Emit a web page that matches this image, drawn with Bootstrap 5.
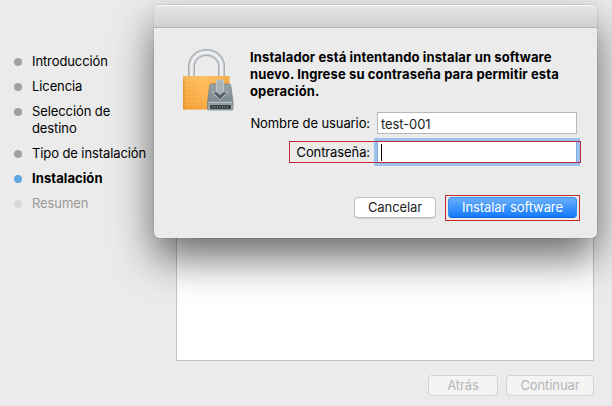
<!DOCTYPE html>
<html lang="es">
<head>
<meta charset="utf-8">
<meta name="viewport" content="width=device-width, initial-scale=1">
<title>Instalador</title>
<link href="https://cdn.jsdelivr.net/npm/bootstrap@5.3.0/dist/css/bootstrap.min.css" rel="stylesheet">
<style>
body{width:612px;height:406px;background:#ebebeb;font:13px/17px Inter,"Liberation Sans",sans-serif;color:#000;letter-spacing:-.1px}
.installer{height:406px}
.steps{width:176px;padding:53px 0 0 14px;gap:8px}
.step-item{gap:10px}
.step-dot{width:8px;height:8px;margin-top:5px;background:#a0a0a0;flex:none}
.step-current{font-weight:700;letter-spacing:.08px}
.step-current .step-dot{background:#62a6e2}
.step-next{color:#999}
.step-next .step-dot{background:#d8d8d8}
.pane-area{padding:20px 18px 10px 0}
.pane-box{background:#fff;border:1px solid #c4c4c4;height:341px}
.mac-btn{height:21px;padding:0;border:1px solid #bfbfbf;border-radius:4px;background:#fff;font-size:13px;line-height:19px;color:#222;letter-spacing:-.08px;box-shadow:0 1px 0 #d2d2d2}
.nav-btn:disabled{background:#f4f4f4;border-color:#d2d2d2;color:#b4b4b4;opacity:1;box-shadow:none}
.btn-back{width:70px}
.btn-next{width:88px}
.btn-cancel{width:82px}
.nav-row{gap:8px;margin-top:14px}
.dialog-box{left:154px;top:5px;width:443px;height:233px;background:#ebebeb;border-radius:5px;box-shadow:0 0 1px rgba(0,0,0,.65),0 20px 40px rgba(0,0,0,.58)}
.dialog-bar{height:23px;border-radius:5px 5px 0 0;background:linear-gradient(#e7e7e7,#d0d0d0);border-bottom:1px solid #b1b1b1;box-shadow:inset 0 1px #f4f4f4}
.dialog-main{padding:21px 20px 0 26px}
.lock-icon{width:56px;height:64px;margin-bottom:-1px;flex:none}
.dialog-title{margin-left:14px;font-weight:700;white-space:nowrap;letter-spacing:.13px}
.form-line{height:22px}
.line-label{padding-right:7px}
.mac-field{width:200px;height:22px;flex:none;padding:2px 3px;border:1px solid #b9b9bd;background:#fff;color:#222;line-height:19px}
.pass-line{margin-top:7px}
.pass-field{border-color:#84aee0;box-shadow:0 0 0 3px #9bc1ed}
.caret-bar{width:1px;height:17px;background:#000}
.mark-pass{left:135px;top:136px;width:292px;height:22px;border:1px solid #c5283d}
.action-row{gap:9px;margin-top:34px}
.mark-button{height:26px;border:1px solid #c62828;padding:1px 2px 2px;margin:-2px -3px 0 0}
.mac-primary,.mac-primary:hover{width:129px;background:linear-gradient(#68aff9,#147afb);border-color:#388cf5;border-bottom-color:#0c62dc;color:#fff;box-shadow:none}
</style>
</head>
<body class="overflow-hidden position-relative">
<main class="installer d-flex">
  <ul class="steps list-unstyled d-flex flex-column mb-0 flex-shrink-0">
    <li class="step-item d-flex"><span class="step-dot rounded-circle"></span><span>Introducción</span></li>
    <li class="step-item d-flex"><span class="step-dot rounded-circle"></span><span>Licencia</span></li>
    <li class="step-item d-flex"><span class="step-dot rounded-circle"></span><span>Selección de<br>destino</span></li>
    <li class="step-item d-flex"><span class="step-dot rounded-circle"></span><span class="text-nowrap">Tipo de instalación</span></li>
    <li class="step-item step-current d-flex"><span class="step-dot rounded-circle"></span><span>Instalación</span></li>
    <li class="step-item step-next d-flex"><span class="step-dot rounded-circle"></span><span>Resumen</span></li>
  </ul>
  <section class="pane-area flex-grow-1">
    <div class="pane-box"></div>
    <div class="nav-row d-flex justify-content-end">
      <button class="btn mac-btn nav-btn btn-back" disabled>Atrás</button>
      <button class="btn mac-btn nav-btn btn-next" disabled>Continuar</button>
    </div>
  </section>
</main>
<section class="dialog-box position-absolute" role="dialog">
  <div class="dialog-bar"></div>
  <div class="dialog-main">
    <div class="d-flex">
      <svg class="lock-icon" viewBox="0 0 56 64">
        <defs>
          <linearGradient id="gold" x2="1" y2="0"><stop stop-color="#d98a24"/><stop offset=".06" stop-color="#f5ac48"/><stop offset=".5" stop-color="#ffb856"/><stop offset="1" stop-color="#eb9b32"/></linearGradient>
          <linearGradient id="shade" x2="0" y2="1"><stop stop-color="#ffd283" stop-opacity=".4"/><stop offset=".5" stop-color="#ffad3e" stop-opacity=".1"/><stop offset="1" stop-color="#ee8e20" stop-opacity=".5"/></linearGradient>
          <linearGradient id="drive" x2="0" y2="1"><stop stop-color="#98a3a8"/><stop offset=".6" stop-color="#7f8c93"/><stop offset="1" stop-color="#a6b0b5"/></linearGradient>
        </defs>
        <g fill="none">
          <path d="M11.500 28V17.500a15 14 0 0 1 30 0V28" stroke="#9ea3a8" stroke-width="7"/>
          <path d="M11.500 28V17.500a15 14 0 0 1 30 0V28" stroke="#c9cdd1" stroke-width="5.500"/>
          <path d="M11.500 28V17.500a15 14 0 0 1 30 0V28" stroke="#eff1f3" stroke-width="2.500"/>
        </g>
        <rect x="3" y="27" width="46.500" height="33.500" rx="1.500" fill="url(#gold)"/>
        <rect x="3" y="27" width="46.500" height="33.500" rx="1.500" fill="url(#shade)"/>
        <path d="M4 31.500h45M4 35.500h45M4 39.500h45M4 43.500h45M4 47.500h45M4 51.500h45M4 55.500h45" stroke="#ffd58b" stroke-opacity=".2" stroke-width=".8"/>
        <path d="M31 35h18.500q1 0 1.300 1.500L53 53v7q0 1-1 1H28.500q-1 0-1-1v-7l2.200-16.500q.2-1.500 1.300-1.500z" fill="url(#drive)" stroke="#6f7c83" stroke-width=".7"/>
        <path d="M28.500 53.500h23.500" stroke="#bcc5c9" stroke-width="1"/>
        <rect x="30" y="56" width="21" height="4" rx="1" fill="#343e43"/>
        <path d="M32 58h17" stroke="#8c979c" stroke-width="1.600" stroke-dasharray="1 1.500"/>
        <path d="M36.500 31h7v12h4.500l-8 8-8-8h4.500z" fill="#a9b4b8" stroke="#c5cdd0" stroke-width=".8"/>
        <path d="M33 43.300h3.500l3.500 2.700 3.500-2.700h3.500L40 50.500z" fill="#56636b"/>
      </svg>
      <div class="dialog-title">Instalador está intentando instalar un software<br>nuevo. Ingrese su contraseña para permitir esta<br>operación.</div>
    </div>
    <div class="form-line d-flex align-items-center justify-content-end">
      <label class="line-label">Nombre de usuario:</label><div class="mac-field">test-001</div>
    </div>
    <div class="form-line pass-line d-flex align-items-center justify-content-end">
      <label class="line-label">Contraseña:</label><div class="mac-field pass-field"><div class="caret-bar"></div></div>
    </div>
    <div class="action-row d-flex justify-content-end">
      <button class="btn mac-btn btn-cancel">Cancelar</button>
      <div class="mark-button"><button class="btn mac-btn mac-primary d-block">Instalar software</button></div>
    </div>
  </div>
  <div class="mark-pass position-absolute"></div>
</section>
<script src="https://cdn.jsdelivr.net/npm/bootstrap@5.3.0/dist/js/bootstrap.bundle.min.js"></script>
</body>
</html>
